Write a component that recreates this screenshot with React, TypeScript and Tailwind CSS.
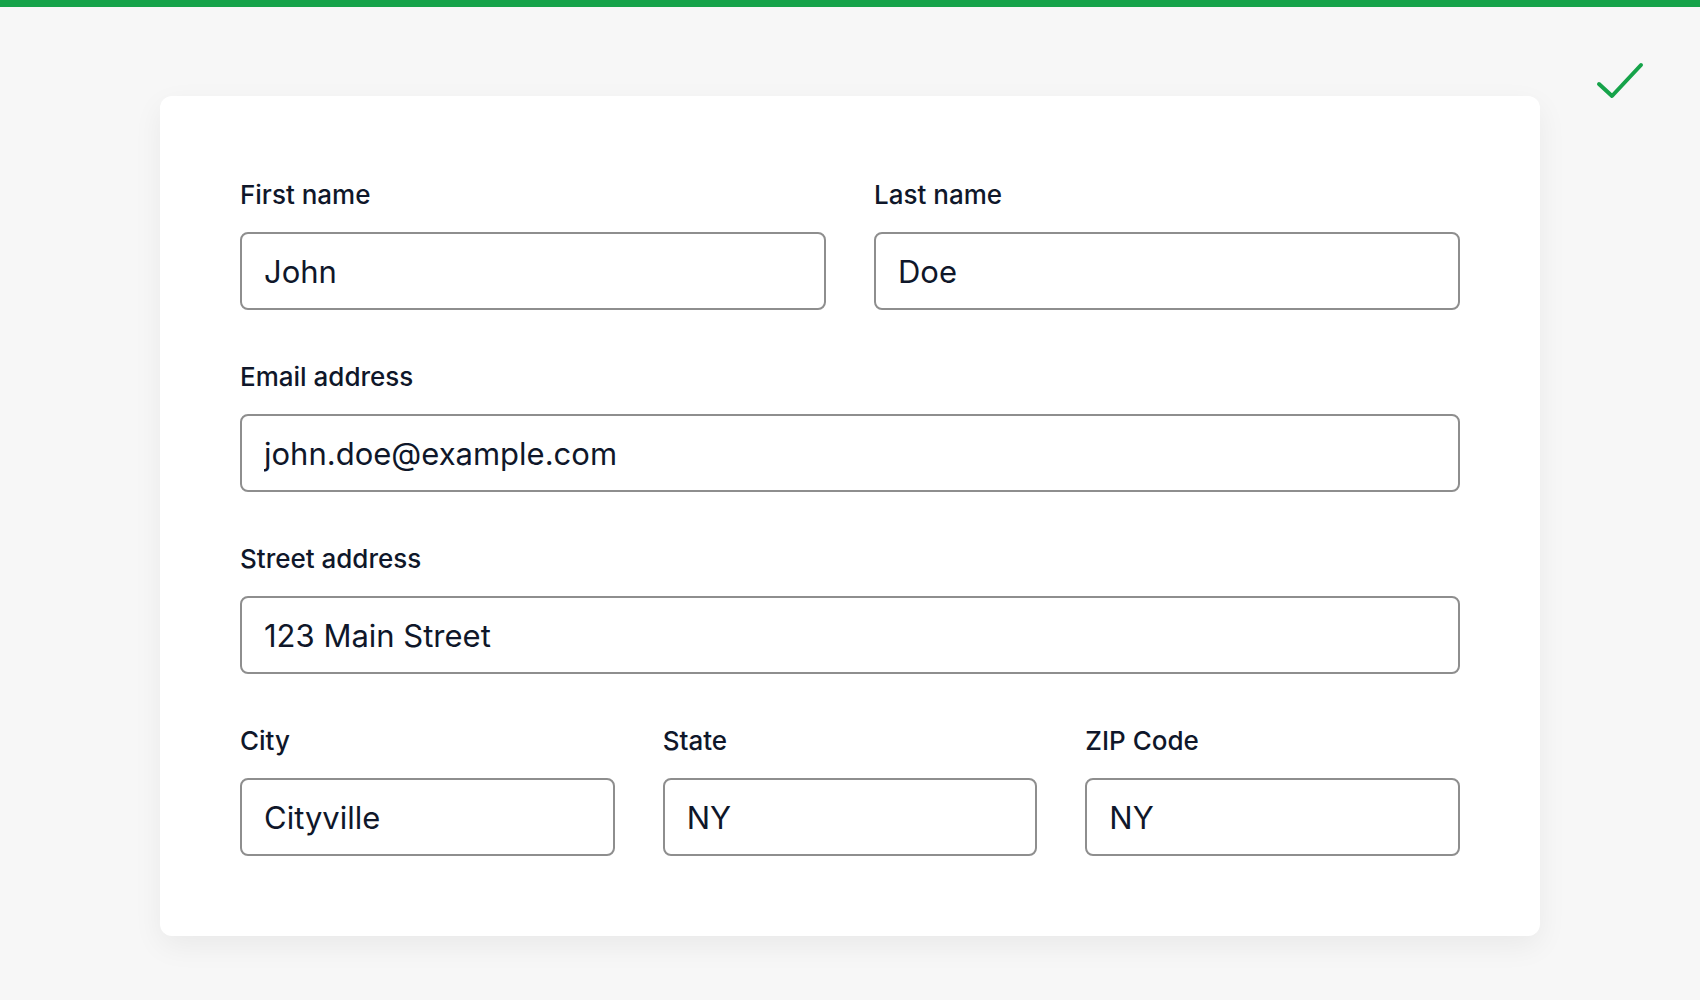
import { useState } from "react";

const fieldLabel = "text-[26px] font-medium leading-[38px] text-[#0f172a] mb-[18px]";
const fieldInput =
  "h-[78px] w-full rounded-lg border-2 border-[#8e8e8e] bg-white pl-[22px] text-[31px] text-[#0f172a] outline-none";

function Field({
  label,
  value,
  onChange,
}: {
  label: string;
  value: string;
  onChange: (v: string) => void;
}) {
  return (
    <label className="flex flex-col">
      <span className={fieldLabel}>{label}</span>
      <input className={fieldInput} value={value} onChange={(e) => onChange(e.target.value)} />
    </label>
  );
}

export default function App() {
  const [form, setForm] = useState({
    firstName: "John",
    lastName: "Doe",
    email: "john.doe@example.com",
    street: "123 Main Street",
    city: "Cityville",
    state: "NY",
    zip: "NY",
  });

  const set = (key: keyof typeof form) => (v: string) => setForm({ ...form, [key]: v });

  return (
    <div className="relative min-h-screen w-full bg-[#f7f7f7] font-['Inter',sans-serif]">
      <div className="h-[7px] w-full bg-[#16a34a]" />
      <svg
        className="absolute left-[1590px] top-[55px]"
        width="60"
        height="50"
        viewBox="0 0 60 50"
        fill="none"
        stroke="#16a34a"
        strokeWidth="4"
        strokeLinecap="round"
        strokeLinejoin="round"
      >
        <path d="M9 29 22 41 51 10" />
      </svg>
      <div className="px-[160px] pt-[89px] pb-16">
        <div className="flex flex-col gap-12 rounded-xl bg-white p-20 shadow-[0_10px_30px_rgba(0,0,0,0.06)]">
          <div className="grid grid-cols-2 gap-12">
            <Field label="First name" value={form.firstName} onChange={set("firstName")} />
            <Field label="Last name" value={form.lastName} onChange={set("lastName")} />
          </div>
          <Field label="Email address" value={form.email} onChange={set("email")} />
          <Field label="Street address" value={form.street} onChange={set("street")} />
          <div className="grid grid-cols-3 gap-12">
            <Field label="City" value={form.city} onChange={set("city")} />
            <Field label="State" value={form.state} onChange={set("state")} />
            <Field label="ZIP Code" value={form.zip} onChange={set("zip")} />
          </div>
        </div>
      </div>
    </div>
  );
}
